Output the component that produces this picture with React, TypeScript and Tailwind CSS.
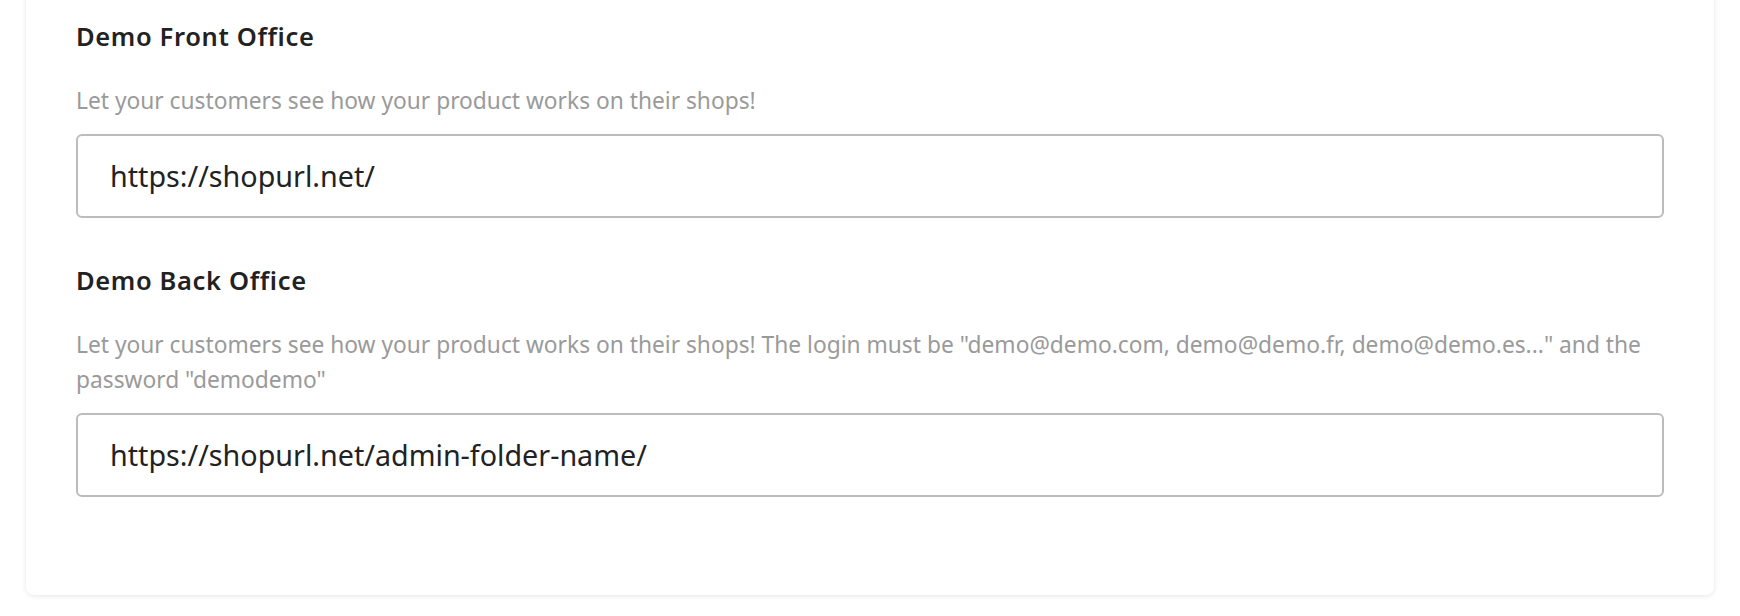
import React from "react";

const font = { fontFamily: '"Noto Sans", "Open Sans", sans-serif' };

function Field({ title, desc, value }: { title: string; desc: React.ReactNode; value: string }) {
  return (
    <div className="flex flex-col">
      <div className="text-[25.5px] leading-[32px] font-semibold tracking-[0.025em] text-[#222222]">{title}</div>
      <div className="mt-[31px] text-[22.75px] leading-[35px] text-[#9a9a9a]">{desc}</div>
      <div className="mt-[16px] h-[84px] rounded-[6px] border-2 border-[#bcbcbc] bg-white flex items-center pl-[32px] text-[28.7px] text-[#222222]">
        {value}
      </div>
    </div>
  );
}

export default function App() {
  return (
    <div className="w-[1740px] h-[616px] bg-white overflow-hidden" style={font}>
      <div className="ml-[26px] w-[1688px] -mt-[12px] pt-[32px] px-[50px] pb-[98px] bg-white rounded-[8px] shadow-[0_1px_5px_rgba(0,0,0,0.10)]">
        <Field
          title="Demo Front Office"
          desc="Let your customers see how your product works on their shops!"
          value="https://shopurl.net/"
        />
        <div className="mt-[46px]">
          <Field
            title="Demo Back Office"
            desc={
              <>
                Let your customers see how your product works on their shops! The login must be "demo@demo.com, demo@demo.fr, demo@demo.es..." and the
                <br />
                password "demodemo"
              </>
            }
            value="https://shopurl.net/admin-folder-name/"
          />
        </div>
      </div>
    </div>
  );
}
